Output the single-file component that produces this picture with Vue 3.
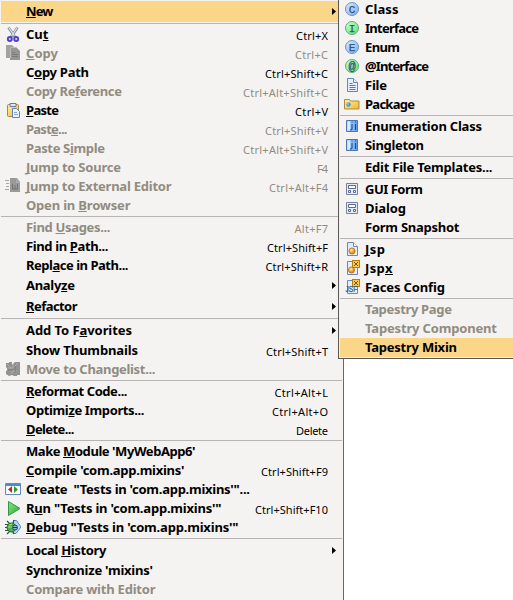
<script setup>
import { ref, onMounted } from 'vue'

// Label: '_' precedes the mnemonic. w / kw: set widths of label and shortcut.
const sep = { sep: true }
const mainMenu = [
  { t: '_New', w: 27, sub: true, hot: true },
  sep,
  { t: 'Cu_t', w: 22, k: 'Ctrl+X', kw: 31, icon: 'cut' },
  { t: '_Copy', w: 31.5, k: 'Ctrl+C', kw: 32, icon: 'copy', off: true },
  { t: 'C_opy Path', w: 62.5, k: 'Ctrl+Shift+C', kw: 62 },
  { t: 'Copy Re_ference', w: 95.5, k: 'Ctrl+Alt+Shift+C', kw: 84, off: true },
  { t: '_Paste', w: 32.5, k: 'Ctrl+V', kw: 32, icon: 'paste' },
  { t: 'Past_e...', w: 41, k: 'Ctrl+Shift+V', kw: 62, off: true },
  { t: 'Paste S_imple', w: 78.5, k: 'Ctrl+Alt+Shift+V', kw: 84, off: true },
  { t: '_Jump to Source', w: 94.5, k: 'F4', kw: 10, off: true },
  { t: '_Jump to External Editor', w: 145, k: 'Ctrl+Alt+F4', kw: 58, icon: 'external', off: true },
  { t: 'Open in _Browser', w: 104, off: true },
  sep,
  { t: 'Find _Usages...', w: 84, k: 'Alt+F7', kw: 32.5, off: true },
  { t: 'Find in _Path...', w: 82, k: 'Ctrl+Shift+F', kw: 60 },
  { t: 'Repl_ace in Path...', w: 102, k: 'Ctrl+Shift+R', kw: 61.5 },
  { t: 'Analy_ze', w: 48.5, sub: true },
  { t: '_Refactor', w: 51, sub: true },
  sep,
  { t: 'Add To F_avorites', w: 105.5, sub: true },
  { t: 'Show Thumbnails', w: 111.5, k: 'Ctrl+Shift+T', kw: 61 },
  { t: 'Move to Changelist...', w: 129, icon: 'changes', off: true },
  sep,
  { t: '_Reformat Code...', w: 101, k: 'Ctrl+Alt+L', kw: 52.5 },
  { t: 'Optimi_ze Imports...', w: 118, k: 'Ctrl+Alt+O', kw: 55 },
  { t: '_Delete...', w: 48, k: 'Delete', kw: 31 },
  sep,
  { t: "Make _Module 'MyWebApp6'", w: 169 },
  { t: "_Compile 'com.app.mixins'", w: 158, k: 'Ctrl+Shift+F9', kw: 66 },
  { t: "Create  \"Tests in 'com.app.mixins'\"...", w: 223.5, icon: 'create' },
  { t: "R_un \"Tests in 'com.app.mixins'\"", w: 195, k: 'Ctrl+Shift+F10', kw: 72, icon: 'run' },
  { t: "_Debug \"Tests in 'com.app.mixins'\"", w: 212, icon: 'debug' },
  sep,
  { t: 'Local _History', w: 80, sub: true },
  { t: "Synchronize 'mixins'", w: 126.5 },
  { t: 'Compare with Editor', w: 129, off: true }
]
const newMenu = [
  { t: 'Class', w: 33, icon: 'class' },
  { t: 'Interface', w: 53.5, icon: 'interface' },
  { t: 'Enum', w: 34.5, icon: 'enum' },
  { t: '@Interface', w: 63.5, icon: 'annotation' },
  { t: 'File', w: 21.5, icon: 'file' },
  { t: 'Package', w: 49.5, icon: 'package' },
  sep,
  { t: 'Enumeration Class', w: 116.5, icon: 'template' },
  { t: 'Singleton', w: 58.5, icon: 'template' },
  sep,
  { t: 'Edit File Templates...', w: 127 },
  sep,
  { t: 'GUI Form', w: 57.5, icon: 'form' },
  { t: 'Dialog', w: 40.5, icon: 'form' },
  { t: 'Form Snapshot', w: 94 },
  sep,
  { t: '_Jsp', w: 19.5, icon: 'jsp' },
  { t: 'Jsp_x', w: 27, icon: 'jspx' },
  { t: 'Faces Config', w: 79.5, icon: 'faces' },
  sep,
  { t: 'Tapestry Page', w: 86.5, off: true },
  { t: 'Tapestry Component', w: 131.5, off: true },
  { t: 'Tapestry Mixin', w: 91.5, hot: true }
]
const menus = [
  { name: 'main', items: mainMenu },
  { name: 'child', items: newMenu }
]

function parts(t) {
  const i = t.indexOf('_')
  return i < 0 ? [t, '', ''] : [t.slice(0, i), t[i + 1], t.slice(i + 2)]
}

const ball = (fill, edge) => `<circle cx="8" cy="8" r="6.5" fill="url(#${fill})" stroke="${edge}"/>`
const letter = (c, s = 11) => `<text x="8" y="11.600" text-anchor="middle" font-family="Liberation Mono" font-size="${s}" fill="#35517c" stroke="#35517c" stroke-width=".25">${c}</text>`
const page = '<path d="M3.500 1.500h6l4 4v9h-10z" fill="#e4eefc" stroke="#6d86b8"/><path d="M9.500 1.500v4h4" fill="#fff" stroke="#6d86b8"/>'
const badge = '<path d="M8 0h8v8H8z" fill="#b57c16"/><path d="M9 1h6v6H9z" fill="#ffc746"/><path d="M10 2l4 4M14 2l-4 4" stroke="#7b5717"/>'

const icons = {
  cut: '<path d="M3.500 1.500L10 11M12.500 1.500L6 11" stroke="#7e8792" stroke-width="2.600"/><path d="M3.700 1.500L9.500 10M12.300 1.500L6.500 10" stroke="#e4ebf4" stroke-width="1.100"/><circle cx="4.800" cy="13" r="2" fill="#d3ccff" stroke="#5142cb" stroke-width="1.900"/><circle cx="11.200" cy="13" r="2" fill="#d3ccff" stroke="#5142cb" stroke-width="1.900"/>',
  copy: '<path d="M1 0h6l3 3v10H1z" fill="#a2a2a2"/><path d="M5 2h6l4 4v9H5z" fill="#959595"/><path d="M5.500 13V2.500H11" fill="none" stroke="#b9b9b9"/><path d="M7 7.500h3M7 9.500h6M7 11.500h6" stroke="#7b7b7b"/>',
  paste: '<rect x="2.500" y="2.500" width="11" height="12" rx="1" fill="url(#gold)" stroke="#b78730"/><path d="M5 1.500h6v3H5z" fill="#dce7f8" stroke="#667ca5"/><path d="M7.500 6.500h4l3 3v6h-7z" fill="#e9f2ff" stroke="#6684b8"/><path d="M9 10.500h3M9 12.500h4" stroke="#87a7d3"/>',
  external: '<path d="M0 2.500h4M1 5.500h3M1 8.500h3M0 11.500h4" stroke="#a5a5a5"/><path d="M5 0h7l3 4v10H5z" fill="#999"/><path d="M11 0v5h4" fill="#aaa"/><path d="M7.500 6v5h5V6M10 7v4" fill="none" stroke="#747474"/>',
  changes: '<path d="M1 2h3V1h3v3l3-3h5v13h-3v1H9l-2-1-3 1-3-2v-3l2-1-2-3z" fill="#919191"/><path d="M2 3l4 4M8 3v4H3M9 6l4-4M4 10h8M6 13l4-4" fill="none" stroke="#adadad"/><path d="M2 9h6M10 5v6" stroke="#7b7b7b"/>',
  create: '<path d="M.5 2.500h15v11H.5z" fill="#f0f5ff" stroke="#6689bd"/><path d="M1 3h14v2H1z" fill="#4e8ad4"/><path d="M2 5h5v8H2zM9 5h5v8H9z" fill="#fff"/><path d="M7 5v7L3 8.500z" fill="#dc2018"/><path d="M9 5v7l4-3.500z" fill="#22a12c"/>',
  run: '<path d="M3.500 1.500v14L15 8.500z" fill="url(#go)" stroke="#349546"/>',
  debug: '<path d="M8.500 1.500h3L16 8l-5 6.500H8z" fill="#b8d8f6" stroke="#5688bd"/><path d="M0 5.500h4M0 11.500h4M2 2l3 3M2 15l3-3M0 8.500h3M9 1L8 4M9 15l-1-2" stroke="#245936" stroke-width="1.200"/><ellipse cx="6.500" cy="8.500" rx="4.500" ry="4.500" fill="#4aad48" stroke="#24663a"/><path d="M4 6l3-1M3 8h4" stroke="#9be978"/><circle cx="10" cy="8.500" r="2.500" fill="#88b9dc" stroke="#28475f"/><path d="M8 8.500h4" stroke="#263c60"/>',
  class: ball('blue', '#6d92c0') + letter('C'),
  interface: ball('green', '#5bae78') + letter('I'),
  enum: ball('blue', '#6d92c0') + letter('E'),
  annotation: ball('green', '#5bae78') + letter('@', 12),
  file: page + '<path d="M5.500 6.500h3M5.500 8.500h6M5.500 10.500h6M5.500 12.500h6" stroke="#5579bd"/>',
  package: '<path d="M.5 13V3.500h5l1 1.500h8.500v8z" fill="url(#gold)" stroke="#b18b3c"/><path d="M1 5h4" stroke="#fff1a8"/><circle cx="4.500" cy="8.500" r="2.200" fill="#4898dd"/><circle cx="4" cy="8" r=".8" fill="#c3e5ff"/>',
  template: '<path d="M2.500 2.500h11v11h-11z" fill="url(#tile)" stroke="#4f76b4"/><path d="M4 4h2v8H4z" fill="#d4edff"/><path d="M8 6v5q0 1-2 1M11.500 6v6M8 3.500v1M11.500 3.500v1" fill="none" stroke="#244c8e" stroke-width="1.200"/>',
  form: '<path d="M2.500 2.500h11v11h-11z" fill="#e7edf6" stroke="#74829f"/><path d="M4.500 4.500h7v3h-7zM4.500 9.500h2v2h-2zM9.500 9.500h2v2h-2z" fill="#fff" stroke="#596b8c"/>',
  jsp: page + '<circle cx="8" cy="10" r="3.100" fill="url(#orb)" stroke="#a46a16" stroke-width=".7"/>',
  jspx: page + '<circle cx="7.500" cy="10" r="3.100" fill="url(#orb)" stroke="#a46a16" stroke-width=".7"/>' + badge,
  faces: page + '<path d="M5 6h8v7H5z" fill="#e4eefc"/>' + badge + '<text x="1.500" y="13" font-family="Liberation Sans" font-size="9" textLength="12" lengthAdjust="spacingAndGlyphs" fill="#304f78" stroke="#304f78" stroke-width=".2">JSF</text>'
}

// Tracks each label so that it fills its set width.
const root = ref(null)
onMounted(() => {
  root.value.querySelectorAll('[data-w]').forEach((el) => {
    const gaps = Math.max(1, el.textContent.length - 1)
    const extra = Number(el.dataset.w) - el.getBoundingClientRect().width
    el.style.letterSpacing = extra / gaps + 'px'
    el.style.marginRight = -extra / gaps + 'px'
  })
})
</script>

<template>
  <div ref="root" class="screen">
    <svg class="defs" width="0" height="0">
      <defs>
        <linearGradient id="blue" x1="0" y1="0" x2="1" y2="1"><stop offset="0" stop-color="#d9ecff" /><stop offset="1" stop-color="#77b0f5" /></linearGradient>
        <linearGradient id="green" x1="0" y1="0" x2="1" y2="1"><stop offset="0" stop-color="#ccffd4" /><stop offset="1" stop-color="#5be470" /></linearGradient>
        <linearGradient id="gold" x1="0" y1="0" x2="1" y2="1"><stop offset="0" stop-color="#fff0a5" /><stop offset="1" stop-color="#efb82f" /></linearGradient>
        <linearGradient id="go" x1="0" y1="0" x2="1" y2="1"><stop offset="0" stop-color="#8ae879" /><stop offset="1" stop-color="#22a83b" /></linearGradient>
        <linearGradient id="tile" x1="0" y1="0" x2="1" y2="0"><stop offset="0" stop-color="#c4e2ff" /><stop offset="1" stop-color="#5ba0ee" /></linearGradient>
        <radialGradient id="orb" cx=".4" cy=".35"><stop offset="0" stop-color="#fff1a0" /><stop offset="1" stop-color="#e88c0c" /></radialGradient>
      </defs>
    </svg>
    <div v-for="m in menus" :key="m.name" class="menu" :class="m.name">
      <template v-for="(it, i) in m.items" :key="i">
        <div v-if="it.sep" class="separator"></div>
        <div v-else class="item" :class="{ hot: it.hot, off: it.off, parent: it.sub }">
          <span class="icon"><svg v-if="it.icon" width="16" height="16" viewBox="0 0 16 16" v-html="icons[it.icon]"></svg></span>
          <span class="label" :data-w="it.w + 0.5">{{ parts(it.t)[0] }}<u v-if="parts(it.t)[1]">{{ parts(it.t)[1] }}</u>{{ parts(it.t)[2] }}</span>
          <span class="space"></span>
          <span v-if="it.k" class="keys" :data-w="it.kw + 1">{{ it.k }}</span>
          <svg v-if="it.sub" class="arrow" width="4" height="7" viewBox="0 0 4 7"><path d="M0 0L4 3.500L0 7z" /></svg>
        </div>
      </template>
    </div>
  </div>
</template>

<style>
body { background: #fff; overflow: hidden; }
</style>

<style scoped>
.screen {
  position: relative;
  width: 513px;
  height: 600px;
  overflow: hidden;
  font-family: "Noto Sans", "Open Sans", sans-serif;
  color: #000;
}
.defs { position: absolute; }
.menu {
  box-sizing: border-box;
  background: #f5f3f2;
}
.main {
  width: 344px;
  height: 600px;
  padding: 1px 1px 0 1px;
  border-right: 1px solid #696765;
}
.child {
  position: absolute;
  left: 338px;
  top: 0;
  width: 180px;
  height: 359px;
  padding-left: 1px;
  border-left: 1px solid #595755;
  border-bottom: 1px solid #595755;
}
.item {
  display: flex;
  height: 19px;
}
.parent { height: 21px; }
.parent .label { line-height: 21px; }
.icon {
  width: 21px;
  height: 16px;
  flex: none;
  padding: 1px 0 0 4px;
}
.icon svg { display: block; }
.label {
  font-size: 13px;
  font-weight: 700;
  line-height: 19px;
  white-space: pre;
  flex: none;
}
.label u {
  text-decoration: underline;
  text-decoration-thickness: 1px;
  text-underline-offset: 1px;
  text-decoration-skip-ink: none;
}
.space { flex: 1; }
.keys {
  flex: none;
  position: relative;
  right: 14px;
  font-size: 11px;
  line-height: 22px;
  white-space: pre;
}
.arrow {
  flex: none;
  margin: 7px 6px 0 0;
}
.hot { background: #fbd588; }
.off { color: #918c80; }
.separator {
  height: 1px;
  margin: 1px 0;
  background: #b7b5b3;
}
</style>
